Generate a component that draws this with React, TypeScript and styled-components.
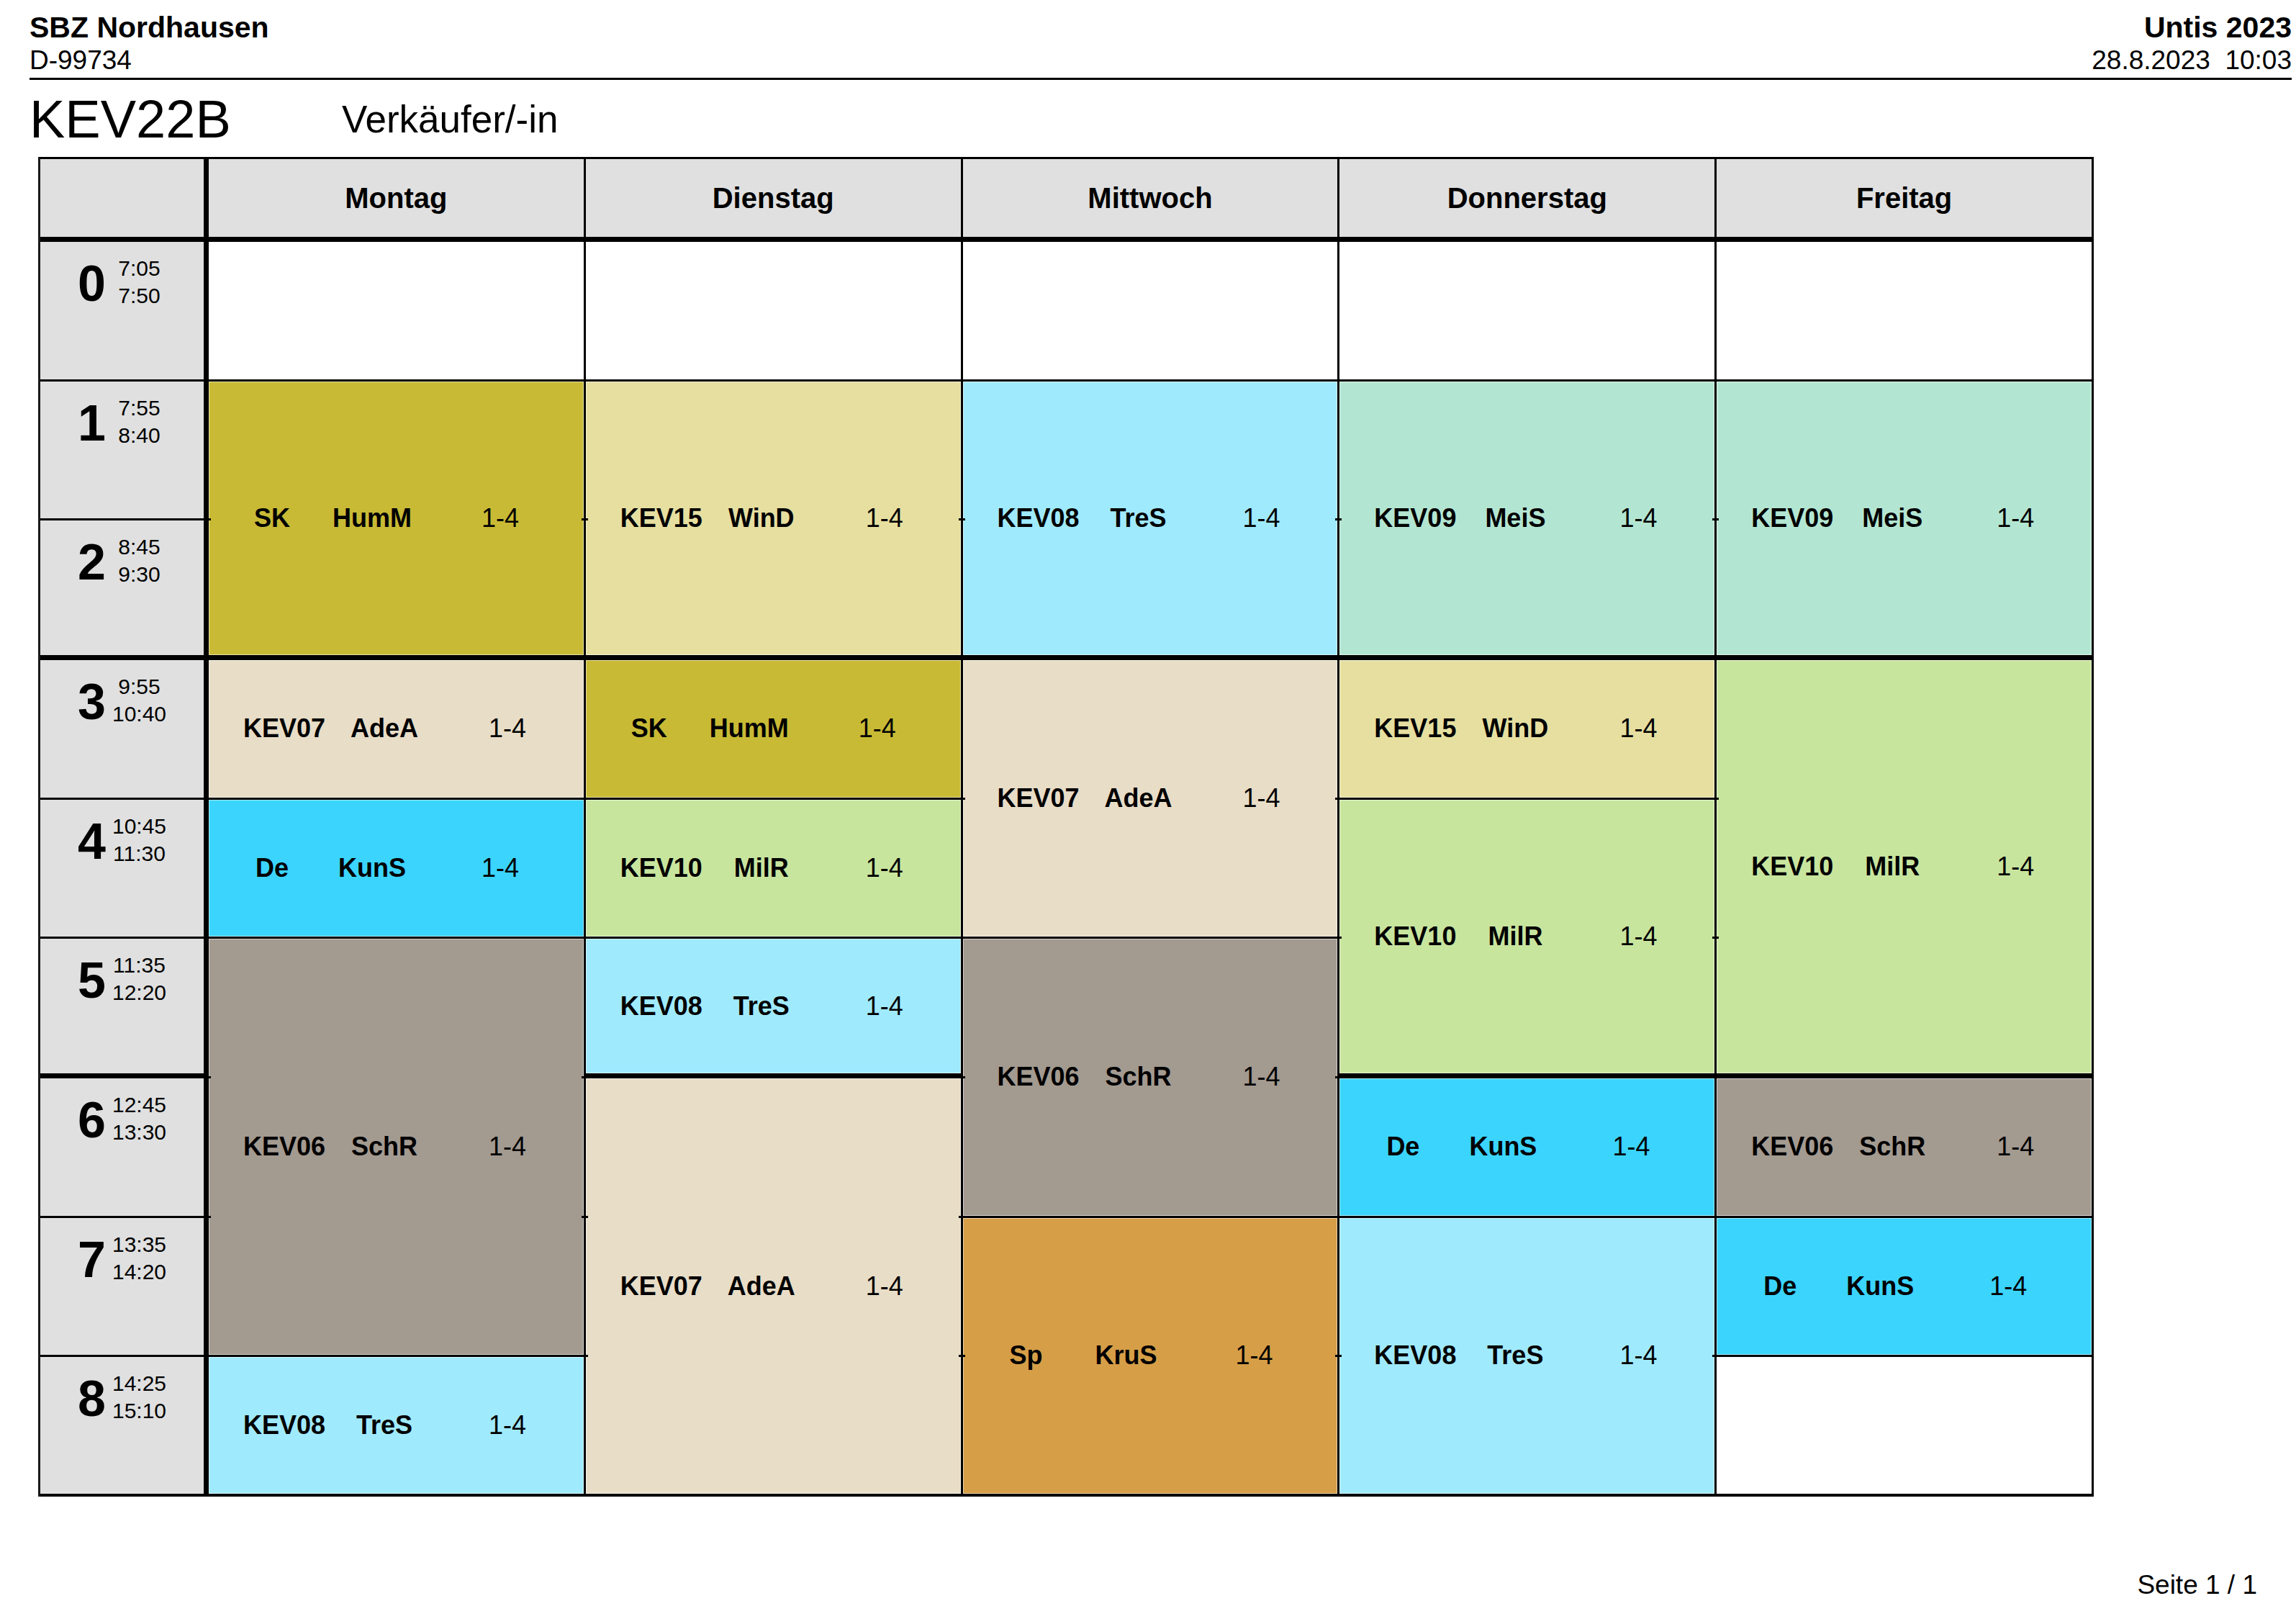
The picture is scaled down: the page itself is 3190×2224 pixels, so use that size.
import React from 'react';
import styled, { createGlobalStyle } from 'styled-components';

const GlobalStyle = createGlobalStyle`
  html, body { margin: 0; padding: 0; background: #ffffff; }
  body { font-family: "Liberation Sans", Arial, sans-serif; color: #000; }
`;

const COLORS = {
  olive: '#C8BA35',
  beige: '#E8DDC7',
  cyan: '#3BD4FD',
  gray: '#A39A90',
  sky: '#A0EAFD',
  khaki: '#E6DFA0',
  green: '#C8E59E',
  mint: '#B3E6D2',
  orange: '#D69E47',
};

const HEAD_BG = '#E0E0E0';

const Page = styled.div`
  width: 3190px;
  height: 2224px;
  box-sizing: border-box;
  padding: 15px 6px 0 41px;
  display: flex;
  flex-direction: column;
  overflow: hidden;
`;

const TopBar = styled.header`
  display: flex;
  justify-content: space-between;
  align-items: flex-start;
  padding-bottom: 2px;
  border-bottom: 3px solid #000;
`;

const TopBlock = styled.div<{ $right?: boolean }>`
  display: flex;
  flex-direction: column;
  align-items: ${(p) => (p.$right ? 'flex-end' : 'flex-start')};
`;

const TopStrong = styled.div`
  font-size: 41px;
  line-height: 46px;
  font-weight: 700;
`;

const TopPlain = styled.div`
  font-size: 37px;
  line-height: 45px;
  white-space: pre;
`;

const TitleRow = styled.div`
  margin-top: 10px;
  display: grid;
  grid-template-columns: 434px auto;
  align-items: start;
`;

const ClassName = styled.h1`
  margin: 0;
  font-size: 74px;
  line-height: 90px;
  font-weight: 400;
`;

const ClassTitle = styled.div`
  font-size: 53px;
  line-height: 90px;
`;

const Timetable = styled.div`
  margin-top: 7px;
  margin-left: 12px;
  width: 2856px;
  height: 1861px;
  box-sizing: border-box;
  border-top: 3px solid #000;
  border-left: 3px solid #1a1a1a;
  display: grid;
  grid-template-columns: 234px repeat(5, 1fr);
  grid-template-rows: 115px repeat(9, 1fr);
`;

const Corner = styled.div`
  grid-column: 1;
  grid-row: 1;
  background: ${HEAD_BG};
  border-right: 7px solid #000;
  border-bottom: 7px solid #000;
`;

const DayHead = styled.div<{ $col: number }>`
  grid-column: ${(p) => p.$col};
  grid-row: 1;
  background: ${HEAD_BG};
  border-right: 3px solid #000;
  border-bottom: 7px solid #000;
  display: flex;
  align-items: center;
  justify-content: center;
  font-size: 40px;
  font-weight: 700;
`;

const PeriodCell = styled.div<{ $row: number; $bottom: number }>`
  grid-column: 1;
  grid-row: ${(p) => p.$row};
  background: ${HEAD_BG};
  border-right: 7px solid #000;
  border-bottom: ${(p) => p.$bottom}px solid #000;
  display: flex;
  justify-content: center;
  align-items: flex-start;
  gap: 9px;
  padding-top: 18px;
`;

const PeriodNo = styled.div`
  font-size: 70px;
  line-height: 70px;
  font-weight: 700;
  margin-top: 5px;
`;

const PeriodTimes = styled.div`
  width: 75px;
  text-align: center;
  font-size: 30px;
  line-height: 38px;
`;

const Slot = styled.div<{ $col: number; $start: number; $end: number; $bottom: number; $bg: string }>`
  grid-column: ${(p) => p.$col};
  grid-row: ${(p) => `${p.$start} / ${p.$end + 1}`};
  background: ${(p) => p.$bg};
  border-right: 3px solid #000;
  border-bottom: ${(p) => p.$bottom}px solid #000;
  box-shadow: ${(p) => (p.$bg === '#ffffff' ? 'none' : 'inset 0 0 0 1px rgba(255,255,255,0.55)')};
  position: relative;
  display: flex;
  align-items: center;
  min-height: 0;
`;

const Tick = styled.span<{ $side: 'left' | 'right' }>`
  position: absolute;
  z-index: 1;
  ${(p) => (p.$side === 'left' ? 'left: -5px;' : 'right: -5px;')}
  width: 8px;
  height: 3px;
  background: #000;
`;

const LessonLine = styled.div<{ $short: boolean }>`
  display: grid;
  grid-template-columns: ${(p) => (p.$short ? '130px 148px 208px' : '130px 148px 194px')};
  padding-left: ${(p) => (p.$short ? 23 : 40)}px;
  font-size: 36px;
  line-height: 42px;
`;

const Field = styled.span<{ $bold?: boolean }>`
  text-align: center;
  white-space: nowrap;
  font-weight: ${(p) => (p.$bold ? 700 : 400)};
`;

const Footer = styled.div`
  margin-top: 101px;
  padding-right: 48px;
  text-align: right;
  font-size: 37px;
  line-height: 44px;
`;

type Lesson = {
  start: number;
  end: number;
  subject?: string;
  teacher?: string;
  color?: keyof typeof COLORS;
};

const DAYS = ['Montag', 'Dienstag', 'Mittwoch', 'Donnerstag', 'Freitag'];

const PERIODS: [string, string][] = [
  ['7:05', '7:50'],
  ['7:55', '8:40'],
  ['8:45', '9:30'],
  ['9:55', '10:40'],
  ['10:45', '11:30'],
  ['11:35', '12:20'],
  ['12:45', '13:30'],
  ['13:35', '14:20'],
  ['14:25', '15:10'],
];

const SCHEDULE: Lesson[][] = [
  [
    { start: 0, end: 0 },
    { start: 1, end: 2, subject: 'SK', teacher: 'HumM', color: 'olive' },
    { start: 3, end: 3, subject: 'KEV07', teacher: 'AdeA', color: 'beige' },
    { start: 4, end: 4, subject: 'De', teacher: 'KunS', color: 'cyan' },
    { start: 5, end: 7, subject: 'KEV06', teacher: 'SchR', color: 'gray' },
    { start: 8, end: 8, subject: 'KEV08', teacher: 'TreS', color: 'sky' },
  ],
  [
    { start: 0, end: 0 },
    { start: 1, end: 2, subject: 'KEV15', teacher: 'WinD', color: 'khaki' },
    { start: 3, end: 3, subject: 'SK', teacher: 'HumM', color: 'olive' },
    { start: 4, end: 4, subject: 'KEV10', teacher: 'MilR', color: 'green' },
    { start: 5, end: 5, subject: 'KEV08', teacher: 'TreS', color: 'sky' },
    { start: 6, end: 8, subject: 'KEV07', teacher: 'AdeA', color: 'beige' },
  ],
  [
    { start: 0, end: 0 },
    { start: 1, end: 2, subject: 'KEV08', teacher: 'TreS', color: 'sky' },
    { start: 3, end: 4, subject: 'KEV07', teacher: 'AdeA', color: 'beige' },
    { start: 5, end: 6, subject: 'KEV06', teacher: 'SchR', color: 'gray' },
    { start: 7, end: 8, subject: 'Sp', teacher: 'KruS', color: 'orange' },
  ],
  [
    { start: 0, end: 0 },
    { start: 1, end: 2, subject: 'KEV09', teacher: 'MeiS', color: 'mint' },
    { start: 3, end: 3, subject: 'KEV15', teacher: 'WinD', color: 'khaki' },
    { start: 4, end: 5, subject: 'KEV10', teacher: 'MilR', color: 'green' },
    { start: 6, end: 6, subject: 'De', teacher: 'KunS', color: 'cyan' },
    { start: 7, end: 8, subject: 'KEV08', teacher: 'TreS', color: 'sky' },
  ],
  [
    { start: 0, end: 0 },
    { start: 1, end: 2, subject: 'KEV09', teacher: 'MeiS', color: 'mint' },
    { start: 3, end: 5, subject: 'KEV10', teacher: 'MilR', color: 'green' },
    { start: 6, end: 6, subject: 'KEV06', teacher: 'SchR', color: 'gray' },
    { start: 7, end: 7, subject: 'De', teacher: 'KunS', color: 'cyan' },
    { start: 8, end: 8 },
  ],
];

const lineAfter = (period: number) => (period === 8 ? 4 : period === 2 || period === 5 ? 7 : 3);

const LessonSlot: React.FC<{ lesson: Lesson; col: number; last: boolean }> = ({ lesson, col, last }) => {
  const bottom = lineAfter(lesson.end);
  const span = lesson.end - lesson.start + 1;
  const bg = lesson.color ? COLORS[lesson.color] : '#ffffff';
  const ticks = [];
  for (let k = 1; k < span; k++) {
    const top = `calc(${k} * (100% + ${bottom}px) / ${span} - 3px)`;
    ticks.push(<Tick key={`l${k}`} $side="left" style={{ top }} />);
    if (!last) ticks.push(<Tick key={`r${k}`} $side="right" style={{ top }} />);
  }
  return (
    <Slot $col={col} $start={lesson.start + 2} $end={lesson.end + 2} $bottom={bottom} $bg={bg}>
      {ticks}
      {lesson.subject && (
        <LessonLine $short={lesson.subject.length <= 2}>
          <Field $bold>{lesson.subject}</Field>
          <Field $bold>{lesson.teacher}</Field>
          <Field>1-4</Field>
        </LessonLine>
      )}
    </Slot>
  );
};

export default function App() {
  return (
    <>
      <GlobalStyle />
      <Page>
        <TopBar>
          <TopBlock>
            <TopStrong>SBZ Nordhausen</TopStrong>
            <TopPlain>D-99734</TopPlain>
          </TopBlock>
          <TopBlock $right>
            <TopStrong>Untis 2023</TopStrong>
            <TopPlain>{'28.8.2023  10:03'}</TopPlain>
          </TopBlock>
        </TopBar>
        <TitleRow>
          <ClassName>KEV22B</ClassName>
          <ClassTitle>Verkäufer/-in</ClassTitle>
        </TitleRow>
        <Timetable>
          <Corner />
          {DAYS.map((d, i) => (
            <DayHead key={d} $col={i + 2}>
              {d}
            </DayHead>
          ))}
          {PERIODS.map(([from, to], p) => (
            <PeriodCell key={p} $row={p + 2} $bottom={lineAfter(p)}>
              <PeriodNo>{p}</PeriodNo>
              <PeriodTimes>
                <div>{from}</div>
                <div>{to}</div>
              </PeriodTimes>
            </PeriodCell>
          ))}
          {SCHEDULE.map((day, d) =>
            day.map((lesson, i) => (
              <LessonSlot key={`${d}-${i}`} lesson={lesson} col={d + 2} last={d === DAYS.length - 1} />
            ))
          )}
        </Timetable>
        <Footer>Seite 1 / 1</Footer>
      </Page>
    </>
  );
}
